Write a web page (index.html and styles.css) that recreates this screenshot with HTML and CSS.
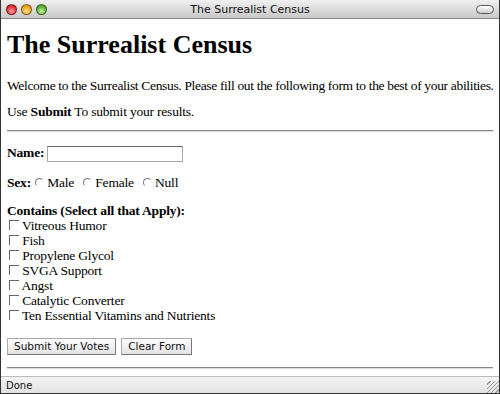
FILE: index.html
```html
<!DOCTYPE html>
<html lang="en">
<head>
  <meta charset="UTF-8">
  <title>The Surrealist Census</title>
  <link rel="stylesheet" href="styles.css">
</head>
<body>
  <div class="window">
    <div class="titlebar">
      <div class="lights">
        <span class="light red"></span>
        <span class="light yellow"></span>
        <span class="light green"></span>
      </div>
      <div class="title">The Surrealist Census</div>
      <span class="pill"></span>
    </div>
    <div class="page">
      <h1>The Surrealist Census</h1>
      <p class="intro">Welcome to the Surrealist Census. Please fill out the following form to the best of your abilities.</p>
      <p>Use <b>Submit</b> To submit your results.</p>
      <hr>
      <form class="census">
        <p class="name"><b>Name:</b> <input type="text" class="name-input"></p>
        <p class="sex">
          <b>Sex:</b>
          <label><span class="radio"></span>Male</label>
          <label><span class="radio"></span>Female</label>
          <label><span class="radio"></span>Null</label>
        </p>
        <p class="contains">
          <b>Contains (Select all that Apply):</b><br>
          <label><span class="check"></span> Vitreous Humor</label><br>
          <label><span class="check"></span> Fish</label><br>
          <label><span class="check"></span> Propylene Glycol</label><br>
          <label><span class="check"></span> SVGA Support</label><br>
          <label><span class="check"></span> Angst</label><br>
          <label><span class="check"></span> Catalytic Converter</label><br>
          <label><span class="check"></span> Ten Essential Vitamins and Nutrients</label>
        </p>
        <p class="buttons">
          <button type="button" class="btn">Submit Your Votes</button>
          <button type="button" class="btn">Clear Form</button>
        </p>
      </form>
      <hr>
    </div>
    <div class="statusbar">
      <span>Done</span>
      <span class="grip"></span>
    </div>
  </div>
</body>
</html>
```

FILE: styles.css
```css
html, body {
  margin: 0;
  padding: 0;
}
body {
  width: 500px;
  height: 394px;
  overflow: hidden;
  background: #fff;
}
.window {
  height: 394px;
  display: flex;
  flex-direction: column;
  border-left: 1px solid #333;
  border-right: 1px solid #333;
  border-bottom: 1px solid #333;
  box-sizing: border-box;
}
.titlebar {
  height: 18px;
  flex: none;
  display: flex;
  align-items: center;
  padding: 0 5px;
  background: linear-gradient(#f0f0f0, #c8c8c8);
  border-bottom: 1px solid #8a8a8a;
  font-family: "DejaVu Sans", sans-serif;
  font-size: 11px;
  color: #111;
}
.lights {
  display: flex;
  gap: 4px;
  width: 80px;
}
.light {
  width: 11px;
  height: 11px;
  border-radius: 50%;
  box-sizing: border-box;
  border: 1px solid rgba(0, 0, 0, 0.45);
}
.red { background: radial-gradient(circle at 50% 70%, #ff9c9c, #d8262a 70%); }
.yellow { background: radial-gradient(circle at 50% 70%, #ffe28a, #e89b12 70%); }
.green { background: radial-gradient(circle at 50% 70%, #c8f29a, #4ea62a 70%); }
.title {
  flex: 1;
  text-align: center;
}
.pill {
  width: 80px;
  display: flex;
  justify-content: flex-end;
}
.pill::after {
  content: "";
  width: 16px;
  height: 7px;
  border: 1px solid #555;
  border-radius: 5px;
  background: linear-gradient(#fff, #ccc);
}
.page {
  flex: 1;
  overflow: hidden;
  padding: 0 6px;
  font-family: "Liberation Serif", serif;
  font-size: 13.5px;
  letter-spacing: -0.2px;
  color: #000;
}
h1 {
  font-size: 26px;
  letter-spacing: 0;
  margin: 11px 0 18px;
}
p {
  margin: 0 0 10px;
}
.intro {
  white-space: nowrap;
  letter-spacing: -0.33px;
}
hr {
  margin: 0 0 15px;
  border: none;
  border-top: 1px solid #888;
  border-bottom: 1px solid #ddd;
}
.census p {
  margin: 0 0 12px;
}
.census .name {
  margin-top: -2px;
  margin-bottom: 13px;
}
.name-input {
  width: 136px;
  height: 16px;
  box-sizing: border-box;
  border: 1px solid #aaa;
  border-top-color: #666;
  vertical-align: middle;
  padding: 0;
}
.sex label {
  margin-right: 5px;
}
.radio {
  display: inline-block;
  width: 7px;
  height: 7px;
  border-radius: 50%;
  border-top: 1px solid #777;
  border-left: 1px solid #777;
  border-right: 1px solid transparent;
  border-bottom: 1px solid transparent;
  margin: 0 3px 0 1px;
}
.contains {
  line-height: 15px;
}
.check {
  display: inline-block;
  width: 9px;
  height: 9px;
  border-top: 1px solid #666;
  border-left: 1px solid #666;
  margin-left: 2px;
}
.buttons {
  display: flex;
  gap: 5px;
  padding-top: 3px;
}
.btn {
  font-family: "DejaVu Sans", sans-serif;
  font-size: 10.5px;
  padding: 1px 6px;
  height: 17px;
  background: linear-gradient(#fdfdfd, #e4e4e4);
  border: 1px solid #aaa;
  border-right-color: #777;
  border-bottom-color: #777;
  border-radius: 0;
  color: #111;
}
.statusbar {
  height: 16px;
  flex: none;
  display: flex;
  align-items: center;
  justify-content: space-between;
  padding-left: 5px;
  background: linear-gradient(#f4f4f4, #e2e2e2);
  border-top: 1px solid #bbb;
  font-family: "DejaVu Sans", sans-serif;
  font-size: 10px;
  color: #111;
}
.grip {
  width: 12px;
  height: 12px;
  align-self: flex-end;
  background: repeating-linear-gradient(135deg, transparent 0 2px, #999 2px 3px);
}
```
